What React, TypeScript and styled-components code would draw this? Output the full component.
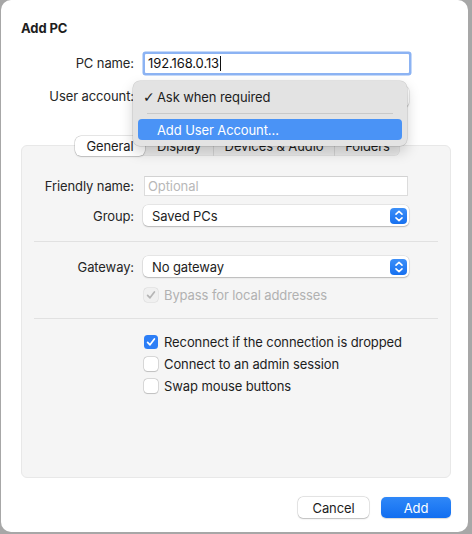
import React from "react";
import styled, { createGlobalStyle } from "styled-components";

const Global = createGlobalStyle`
  html, body { margin: 0; padding: 0; background: #a7a7a7; }
  body { font-family: Inter, "Liberation Sans", Arial, sans-serif; font-size: 13px; letter-spacing: -0.1px; color: #262626; }
  * { box-sizing: border-box; }
`;

const Window = styled.div`
  width: 467px;
  height: 532px;
  margin-left: 1px;
  background: #ffffff;
  border-radius: 10px;
  padding: 20px 17px 0 20px;
  display: flex;
  flex-direction: column;
`;

const Title = styled.div`
  font-weight: 700;
  font-size: 13px;
  line-height: 16px;
  color: #1e1e1e;
`;

const TopForm = styled.div`
  margin-top: 16px;
  display: flex;
  flex-direction: column;
  gap: 11px;
`;

const Row = styled.div<{ $h?: number }>`
  position: relative;
  display: grid;
  grid-template-columns: 113px 266px;
  column-gap: 9px;
  align-items: center;
  height: ${(p) => p.$h ?? 22}px;
`;

const Label = styled.div`
  text-align: right;
  line-height: 16px;
  color: #262626;
  white-space: nowrap;
`;

const FocusField = styled.div`
  margin-left: 2px;
  height: 19px;
  background: #fff;
  border-radius: 1px;
  box-shadow: 0 0 0 2.5px #8cb3f3;
  display: flex;
  align-items: center;
  padding-left: 3px;
  line-height: 16px;
  color: #111;
`;

const Caret = styled.span`
  display: inline-block;
  width: 1px;
  height: 15px;
  background: #111;
  margin-left: 1px;
`;

const TextField = styled.div`
  margin-left: 1px;
  margin-right: 1px;
  height: 20px;
  background: #fff;
  border: 1px solid #dcdcdc;
  border-top-color: #d2d2d2;
  display: flex;
  align-items: center;
  padding-left: 3px;
  line-height: 16px;
`;

const Placeholder = styled.span`
  color: #b8b8b8;
`;

const Popup = styled.div`
  height: 21px;
  background: #fff;
  border-radius: 5px;
  box-shadow: 0 0 0 0.5px rgba(0, 0, 0, 0.12), 0 1px 1.5px rgba(0, 0, 0, 0.2);
  display: flex;
  align-items: center;
  justify-content: space-between;
  padding: 0 2px 0 9px;
  line-height: 16px;
  color: #1d1d1d;
`;

const Stepper = styled.div`
  width: 17px;
  height: 16px;
  border-radius: 4px;
  background: linear-gradient(#3c8ff8, #1670f0);
  display: flex;
  align-items: center;
  justify-content: center;
`;

const Menu = styled.div`
  position: absolute;
  left: 112px;
  top: -4px;
  width: 274px;
  height: 65px;
  background: #e3e3e3;
  border-radius: 7px;
  box-shadow: 0 0 0 0.5px rgba(0, 0, 0, 0.18), 0 6px 14px rgba(0, 0, 0, 0.18);
  padding: 5px 5px 6px 5px;
  display: flex;
  flex-direction: column;
  z-index: 10;
`;

const MenuItem = styled.div<{ $active?: boolean }>`
  height: ${(p) => (p.$active ? 21 : 22)}px;
  border-radius: 4px;
  display: flex;
  align-items: center;
  padding-left: 5px;
  background: ${(p) => (p.$active ? "#4a93f6" : "transparent")};
  color: ${(p) => (p.$active ? "#fff" : "#1d1d1d")};
  line-height: 16px;
`;

const Check = styled.span`
  width: 14px;
  font-family: "DejaVu Sans", sans-serif;
  font-size: 14px;
  line-height: 16px;
`;

const MenuSep = styled.div`
  height: 1px;
  margin: 5px 9px 5px 9px;
  background: #c9c9c9;
`;

const TabBar = styled.div`
  align-self: center;
  margin-top: 29px;
  margin-bottom: -11px;
  margin-left: 3px;
  position: relative;
  z-index: 2;
  display: flex;
  height: 20px;
  background: #e9e9e9;
  border-radius: 6px;
  box-shadow: inset 0 0 0 0.5px rgba(0, 0, 0, 0.06);
`;

const Tab = styled.div<{ $w: number; $sel?: boolean; $sep?: boolean }>`
  width: ${(p) => p.$w}px;
  height: 20px;
  display: flex;
  align-items: center;
  justify-content: center;
  line-height: 16px;
  color: #1d1d1d;
  border-radius: 6px;
  position: relative;
  white-space: nowrap;
  background: ${(p) => (p.$sel ? "#fff" : "transparent")};
  box-shadow: ${(p) => (p.$sel ? "0 0 0 0.5px rgba(0,0,0,0.2), 0 1px 1.5px rgba(0,0,0,0.15)" : "none")};
  border-left: ${(p) => (p.$sep ? "1px solid #d2d2d2" : "none")};
  border-top-left-radius: ${(p) => (p.$sep ? 0 : 6)}px;
  border-bottom-left-radius: ${(p) => (p.$sep ? 0 : 6)}px;
`;

const Panel = styled.div`
  height: 333px;
  background: #f5f5f5;
  border: 1px solid #e8e8e8;
  border-radius: 6px;
  padding-top: 29px;
  display: flex;
  flex-direction: column;
`;

const PanelRow = styled.div<{ $h?: number; $mt?: number }>`
  display: grid;
  grid-template-columns: 112px 266px;
  column-gap: 9px;
  align-items: center;
  height: ${(p) => p.$h ?? 21}px;
  margin-top: ${(p) => p.$mt ?? 0}px;
`;

const Separator = styled.div<{ $mt: number }>`
  height: 1px;
  background: #e1e1e1;
  margin: ${(p) => p.$mt}px 12px 0 12px;
`;

const CheckRow = styled.label<{ $disabled?: boolean }>`
  grid-column: 2;
  display: flex;
  align-items: center;
  gap: 6px;
  margin-left: 1px;
  line-height: 16px;
  white-space: nowrap;
  color: ${(p) => (p.$disabled ? "#b1b1b1" : "#1d1d1d")};
`;

const Box = styled.span<{ $state: "on" | "off" | "dis" }>`
  flex: none;
  width: 14px;
  height: 14px;
  border-radius: 3.5px;
  display: inline-flex;
  align-items: center;
  justify-content: center;
  background: ${(p) => (p.$state === "on" ? "#2c7ef6" : p.$state === "dis" ? "#f0f0f0" : "#fff")};
  box-shadow: ${(p) =>
    p.$state === "on"
      ? "none"
      : p.$state === "dis"
      ? "0 0 0 0.5px rgba(0,0,0,0.12)"
      : "0 0 0 0.5px rgba(0,0,0,0.22), 0 0.5px 1px rgba(0,0,0,0.12)"};
`;

const Footer = styled.div`
  display: flex;
  justify-content: flex-end;
  gap: 12px;
  margin-top: 19px;
`;

const Button = styled.div<{ $primary?: boolean; $w: number }>`
  width: ${(p) => p.$w}px;
  height: 21px;
  border-radius: 5px;
  display: flex;
  align-items: center;
  justify-content: center;
  line-height: 16px;
  color: ${(p) => (p.$primary ? "#fff" : "#1d1d1d")};
  background: ${(p) => (p.$primary ? "linear-gradient(#2f88f8, #126ef0)" : "#fff")};
  box-shadow: ${(p) =>
    p.$primary
      ? "0 0.5px 1px rgba(0,0,0,0.15)"
      : "0 0 0 0.5px rgba(0,0,0,0.15), 0 0.5px 1.5px rgba(0,0,0,0.2)"};
`;

const StepperIcon = () => (
  <svg width="10" height="14" viewBox="0 0 10 14">
    <path d="M2 5.2 L5 2.4 L8 5.2" fill="none" stroke="#fff" strokeWidth="1.6" strokeLinecap="round" strokeLinejoin="round" />
    <path d="M2 8.8 L5 11.6 L8 8.8" fill="none" stroke="#fff" strokeWidth="1.6" strokeLinecap="round" strokeLinejoin="round" />
  </svg>
);

const CheckMark = ({ color }: { color: string }) => (
  <svg width="10" height="10" viewBox="0 0 10 10">
    <path d="M1.6 5.3 L4 7.8 L8.4 2" fill="none" stroke={color} strokeWidth="1.7" strokeLinecap="round" strokeLinejoin="round" />
  </svg>
);

const PopupButton = ({ value }: { value?: string }) => (
  <Popup>
    <span>{value}</span>
    <Stepper>
      <StepperIcon />
    </Stepper>
  </Popup>
);

export default function App() {
  return (
    <>
      <Global />
      <Window>
        <Title>Add PC</Title>
        <TopForm>
          <Row>
            <Label>PC name:</Label>
            <FocusField>
              192.168.0.13
              <Caret />
            </FocusField>
          </Row>
          <Row>
            <Label>User account:</Label>
            <PopupButton />
            <Menu>
              <MenuItem>
                <Check>✓</Check>
                Ask when required
              </MenuItem>
              <MenuSep />
              <MenuItem $active>
                <Check />
                Add User Account...
              </MenuItem>
            </Menu>
          </Row>
        </TopForm>

        <TabBar>
          <Tab $w={70} $sel>General</Tab>
          <Tab $w={68}>Display</Tab>
          <Tab $w={121} $sep>Devices &amp; Audio</Tab>
          <Tab $w={66} $sep>Folders</Tab>
        </TabBar>

        <Panel>
          <PanelRow>
            <Label>Friendly name:</Label>
            <TextField>
              <Placeholder>Optional</Placeholder>
            </TextField>
          </PanelRow>
          <PanelRow $mt={9}>
            <Label>Group:</Label>
            <PopupButton value="Saved PCs" />
          </PanelRow>
          <Separator $mt={15} />
          <PanelRow $mt={14}>
            <Label>Gateway:</Label>
            <PopupButton value="No gateway" />
          </PanelRow>
          <PanelRow $h={16} $mt={10}>
            <CheckRow $disabled>
              <Box $state="dis">
                <CheckMark color="#b5b5b5" />
              </Box>
              Bypass for local addresses
            </CheckRow>
          </PanelRow>
          <Separator $mt={15} />
          <PanelRow $h={16} $mt={15}>
            <CheckRow>
              <Box $state="on">
                <CheckMark color="#fff" />
              </Box>
              Reconnect if the connection is dropped
            </CheckRow>
          </PanelRow>
          <PanelRow $h={16} $mt={6}>
            <CheckRow>
              <Box $state="off" />
              Connect to an admin session
            </CheckRow>
          </PanelRow>
          <PanelRow $h={16} $mt={6}>
            <CheckRow>
              <Box $state="off" />
              Swap mouse buttons
            </CheckRow>
          </PanelRow>
        </Panel>

        <Footer>
          <Button $w={71}>Cancel</Button>
          <Button $w={70} $primary>Add</Button>
        </Footer>
      </Window>
    </>
  );
}
